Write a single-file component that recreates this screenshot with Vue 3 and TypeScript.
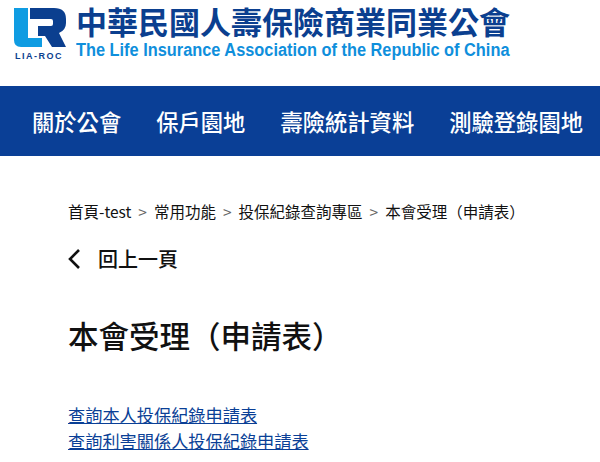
<script setup lang="ts">
const nav: string[] = ['關於公會', '保戶園地', '壽險統計資料', '測驗登錄園地']
const crumbs: string[] = ['首頁-test', '常用功能', '投保紀錄查詢專區', '本會受理（申請表）']
const links: string[] = ['查詢本人投保紀錄申請表', '查詢利害關係人投保紀錄申請表']
</script>

<template>
  <div class="page">
    <header class="top">
      <div class="logo">
        <svg class="mark" width="52" height="40" viewBox="0 0 52 40" aria-hidden="true">
          <path d="M0 0H14V30H28V39H7Q0 39 0 32Z" fill="#0f9ce2" />
          <path d="M16 0H40Q52 0 52 11V15Q52 22 45 25L52 39H38L31 28H24V18H37Q39 18 39 16V13Q39 11 37 11H16Z" fill="#0b3f8f" />
        </svg>
        <span class="roc">LIA-ROC</span>
      </div>
      <div class="titles">
        <div class="zh">中華民國人壽保險商業同業公會</div>
        <div class="en">The Life Insurance Association of the Republic of China</div>
      </div>
    </header>
    <nav class="nav">
      <a v-for="item in nav" :key="item" class="nav-item">{{ item }}</a>
    </nav>
    <main class="main">
      <div class="crumbs">
        <template v-for="(c, i) in crumbs" :key="c">
          <span v-if="i > 0" class="sep">&gt;</span>
          <span>{{ c }}</span>
        </template>
      </div>
      <div class="back">
        <svg width="14" height="20" viewBox="0 0 14 20" aria-hidden="true">
          <path d="M11 1L2 10L11 19" fill="none" stroke="#111" stroke-width="2.6" />
        </svg>
        <span>回上一頁</span>
      </div>
      <h1 class="title">本會受理（申請表）</h1>
      <div class="links">
        <a v-for="l in links" :key="l" class="link">{{ l }}</a>
      </div>
    </main>
  </div>
</template>

<style>
html, body { margin: 0; background: #fff; }
</style>

<style scoped>
.page {
  width: 600px;
  height: 462px;
  overflow: hidden;
  font-family: "Noto Sans CJK TC", "Noto Sans", sans-serif;
  color: #111;
}
.top {
  display: flex;
  height: 86px;
  box-sizing: border-box;
  padding: 8px 0 0 14px;
  gap: 9px;
}
.logo { width: 53px; display: flex; flex-direction: column; align-items: flex-start; }
.mark { display: block; }
.roc {
  margin: 3px 0 0 1px;
  font: 700 9px/10px "Liberation Sans", sans-serif;
  letter-spacing: 1.5px;
  color: #0b3f8f;
  white-space: nowrap;
}
.titles { min-width: 0; }
.zh {
  font: 700 31px/36px "Noto Sans CJK TC", sans-serif;
  color: #0b3f8f;
  white-space: nowrap;
  margin-top: -5px;
}
.en {
  font: 700 18px/20px "Liberation Sans", sans-serif;
  color: #0f8fdc;
  white-space: nowrap;
  transform-origin: left;
  transform: scaleX(0.908);
  margin-top: 1px;
}
.nav {
  height: 70px;
  background: #0a3f96;
  display: flex;
  align-items: center;
  padding-left: 32px;
  gap: 35px;
}
.nav-item {
  color: #fff;
  font-size: 22.3px;
  font-weight: 500;
  line-height: 30px;
  white-space: nowrap;
}
.main { padding: 43px 0 0 68px; }
.crumbs {
  display: flex;
  align-items: center;
  gap: 7px;
  font-size: 15.5px;
  line-height: 24px;
  white-space: nowrap;
}
.sep { color: #666; }
.back {
  display: flex;
  align-items: center;
  gap: 16px;
  margin-top: 22px;
  font-size: 20px;
  line-height: 28px;
  font-weight: 500;
}
.title {
  margin: 42px 0 0;
  font-size: 30.5px;
  line-height: 40px;
  font-weight: 500;
  color: #111;
}
.links { margin-top: 47px; display: flex; flex-direction: column; }
.link {
  color: #0a3f96;
  text-decoration: underline;
  font-size: 17.2px;
  line-height: 26px;
}
</style>
